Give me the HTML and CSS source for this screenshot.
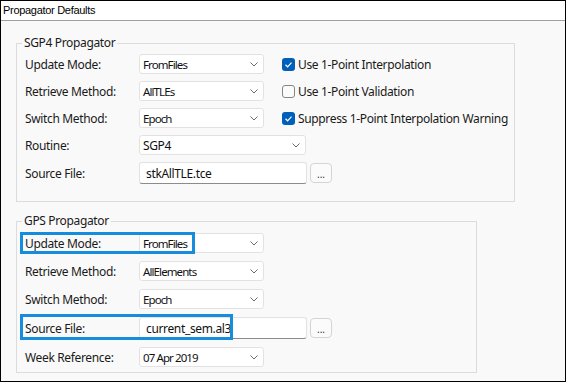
FILE: index.html
```html
<!DOCTYPE html>
<html lang="en">
<head>
  <meta charset="UTF-8" />
  <title>Propagator Defaults</title>
  <link rel="stylesheet" href="styles.css">
</head>
<body>

  <div class="window">
    <div class="titlebar">Propagator Defaults</div>

    <div class="content">
      <!-- SGP4 -->
      <fieldset class="group sgp4">
        <legend>SGP4 Propagator</legend>
        <div class="rows">
          <div class="row">
            <span class="label">Update Mode:</span>
            <div class="select"><span>FromFiles</span><svg class="chev" width="8" height="5" viewBox="0 0 8 5"><path d="M0.5 0.5 L4 4 L7.5 0.5" fill="none" stroke="#6b6b6b" stroke-width="1"/></svg></div>
            <label class="check"><span class="box on"><svg width="13" height="13" viewBox="0 0 13 13"><path d="M3.5 6.8 L5.6 8.8 L9.5 4.6" fill="none" stroke="#fff" stroke-width="1.2"/></svg></span>Use 1-Point Interpolation</label>
          </div>
          <div class="row">
            <span class="label">Retrieve Method:</span>
            <div class="select"><span>AllTLEs</span><svg class="chev" width="8" height="5" viewBox="0 0 8 5"><path d="M0.5 0.5 L4 4 L7.5 0.5" fill="none" stroke="#6b6b6b" stroke-width="1"/></svg></div>
            <label class="check"><span class="box off"></span>Use 1-Point Validation</label>
          </div>
          <div class="row">
            <span class="label">Switch Method:</span>
            <div class="select"><span>Epoch</span><svg class="chev" width="8" height="5" viewBox="0 0 8 5"><path d="M0.5 0.5 L4 4 L7.5 0.5" fill="none" stroke="#6b6b6b" stroke-width="1"/></svg></div>
            <label class="check"><span class="box on"><svg width="13" height="13" viewBox="0 0 13 13"><path d="M3.5 6.8 L5.6 8.8 L9.5 4.6" fill="none" stroke="#fff" stroke-width="1.2"/></svg></span>Suppress 1-Point Interpolation Warning</label>
          </div>
          <div class="row">
            <span class="label">Routine:</span>
            <div class="select wide"><span class="big">SGP4</span><svg class="chev" width="8" height="5" viewBox="0 0 8 5"><path d="M0.5 0.5 L4 4 L7.5 0.5" fill="none" stroke="#6b6b6b" stroke-width="1"/></svg></div>
          </div>
          <div class="row tall">
            <span class="label">Source File:</span>
            <div class="input">stkAllTLE.tce</div>
            <button class="browse">...</button>
          </div>
        </div>
      </fieldset>

      <!-- GPS -->
      <fieldset class="group gps">
        <legend>GPS Propagator</legend>
        <div class="rows">
          <div class="row">
            <span class="label">Update Mode:</span>
            <div class="select"><span>FromFiles</span><svg class="chev" width="8" height="5" viewBox="0 0 8 5"><path d="M0.5 0.5 L4 4 L7.5 0.5" fill="none" stroke="#6b6b6b" stroke-width="1"/></svg></div>
            <div class="mark mark-mode"></div>
          </div>
          <div class="row">
            <span class="label">Retrieve Method:</span>
            <div class="select"><span>AllElements</span><svg class="chev" width="8" height="5" viewBox="0 0 8 5"><path d="M0.5 0.5 L4 4 L7.5 0.5" fill="none" stroke="#6b6b6b" stroke-width="1"/></svg></div>
          </div>
          <div class="row">
            <span class="label">Switch Method:</span>
            <div class="select"><span>Epoch</span><svg class="chev" width="8" height="5" viewBox="0 0 8 5"><path d="M0.5 0.5 L4 4 L7.5 0.5" fill="none" stroke="#6b6b6b" stroke-width="1"/></svg></div>
          </div>
          <div class="row tall">
            <span class="label">Source File:</span>
            <div class="input">current_sem.al3</div>
            <button class="browse">...</button>
            <div class="mark mark-file"></div>
          </div>
          <div class="row">
            <span class="label">Week Reference:</span>
            <div class="select"><span>07 Apr 2019</span><svg class="chev" width="8" height="5" viewBox="0 0 8 5"><path d="M0.5 0.5 L4 4 L7.5 0.5" fill="none" stroke="#6b6b6b" stroke-width="1"/></svg></div>
          </div>
        </div>
      </fieldset>
    </div>
  </div>

</body>
</html>
```

FILE: styles.css
```css
body {
  margin: 0;
}
.window {
  width: 566px;
  height: 382px;
  box-sizing: border-box;
  border: 1px solid #000;
  background-color: #f9f9f9;
  display: flex;
  flex-direction: column;
  font-family: "Noto Sans", sans-serif;
  font-size: 12px;
  letter-spacing: -0.35px;
  color: #1a1a1a;
}
.titlebar {
  height: 19px;
  line-height: 19px;
  background-color: #fff;
  border-bottom: 1px solid #a0a0a0;
  padding-left: 2px;
  font-family: "Liberation Sans", Arial, sans-serif;
  font-size: 11px;
  letter-spacing: -0.3px;
  color: #000;
}
.content {
  padding: 14px 0 0 15px;
}
.group {
  margin: 0;
  min-width: 0;
  box-sizing: border-box;
  border: 1px solid #dcdcdc;
  padding: 3px 8px 17px 8px;
}
.group legend {
  padding: 0 2px;
  margin-left: -3px;
  line-height: 16px;
}
.sgp4 {
  width: 499px;
}
.gps {
  width: 461px;
  margin-top: 11px;
  padding-top: 4px;
  padding-bottom: 5px;
}
.rows {
  display: flex;
  flex-direction: column;
  gap: 7px;
}
.gps .rows {
  gap: 8px;
}
.row {
  display: flex;
  align-items: center;
  height: 20px;
  position: relative;
  white-space: nowrap;
}
.row.tall {
  height: 22px;
}
.label {
  width: 114px;
  flex: none;
}
.select {
  width: 125px;
  height: 20px;
  flex: none;
  box-sizing: border-box;
  border: 1px solid #e2e2e2;
  border-radius: 3px;
  background-color: #fff;
  display: flex;
  align-items: center;
  justify-content: space-between;
  padding: 0 5px 0 3px;
  font-size: 11.5px;
  letter-spacing: -0.9px;
  color: #111;
}
.select.wide {
  width: 167px;
}
.select .big {
  font-size: 12px;
  letter-spacing: -0.35px;
}
.chev {
  flex: none;
}
.input {
  width: 168px;
  height: 22px;
  flex: none;
  box-sizing: border-box;
  border: 1px solid #e2e2e2;
  border-bottom-color: #8c8c8c;
  border-radius: 3px;
  background-color: #fff;
  padding-left: 6px;
  display: flex;
  align-items: center;
  color: #111;
}
.browse {
  margin-left: 3px;
  width: 22px;
  height: 20px;
  flex: none;
  padding: 0 0 3px;
  border: 1px solid #d4d4d4;
  border-radius: 4px;
  background-color: #fbfbfb;
  font-family: "Noto Sans", sans-serif;
  font-size: 10px;
  letter-spacing: 0;
  line-height: 10px;
  display: flex;
  align-items: flex-end;
  justify-content: center;
  color: #333;
}
.check {
  margin-left: 18px;
  display: flex;
  align-items: center;
  gap: 3px;
}
.box {
  width: 13px;
  height: 13px;
  flex: none;
  box-sizing: border-box;
  border-radius: 3px;
  display: flex;
}
.box.on {
  background-color: #005fb8;
}
.box.off {
  border: 1px solid #858585;
  background-color: #fbfbfb;
}
.mark {
  position: absolute;
  left: -5px;
  box-sizing: border-box;
  border: 3px solid #168cdc;
}
.mark-mode {
  top: -1px;
  width: 175px;
  height: 22px;
}
.mark-file {
  top: -3px;
  width: 213px;
  height: 26px;
}
```
